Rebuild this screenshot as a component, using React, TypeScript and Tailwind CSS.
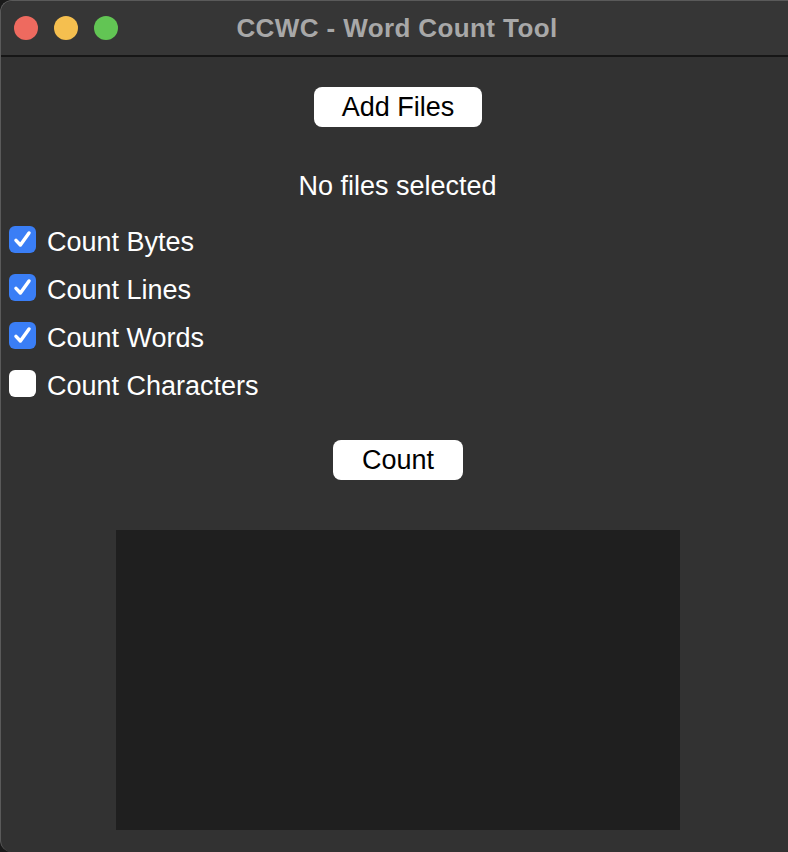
import React, { useState } from "react";

function Check({ checked }: { checked: boolean }) {
  return checked ? (
    <div className="w-[27px] h-[27px] rounded-[6px] bg-[#3a7ef6] flex items-center justify-center shrink-0">
      <svg width="21" height="21" viewBox="0 0 20 20" fill="none">
        <path d="M3.8 10.8 L8 15.2 L16.2 3.8" stroke="white" strokeWidth="3.3" strokeLinecap="round" strokeLinejoin="round" />
      </svg>
    </div>
  ) : (
    <div className="w-[27px] h-[27px] rounded-[6px] bg-white shrink-0" />
  );
}

export default function App() {
  const [opts] = useState([
    { label: "Count Bytes", checked: true },
    { label: "Count Lines", checked: true },
    { label: "Count Words", checked: true },
    { label: "Count Characters", checked: false },
  ]);
  return (
    <div className="w-[788px] h-[852px] bg-[#1a1a1a] overflow-hidden" style={{ fontFamily: '"Liberation Sans", Arial, sans-serif' }}>
      <div className="w-[800px] h-[852px] bg-[#323232] rounded-tl-[12px] rounded-bl-[12px] border-t border-l border-[#5a5a5a] flex flex-col">
        <div className="h-[56px] shrink-0 flex items-center relative border-b-2 border-[#161616] bg-[#363636] rounded-tl-[12px]">
          <div className="flex gap-[16px] pl-[13px]">
            <div className="w-[24px] h-[24px] rounded-full bg-[#ee6a5f]" />
            <div className="w-[24px] h-[24px] rounded-full bg-[#f5bf4f]" />
            <div className="w-[24px] h-[24px] rounded-full bg-[#62c554]" />
          </div>
          <div className="absolute left-[225px] w-[342px] top-0 h-[54px] flex items-center justify-center text-[#a8a8a8] font-bold text-[26px] tracking-[0.4px]">
            CCWC - Word Count Tool
          </div>
        </div>
        <div className="w-[788px] flex flex-col text-[27px]">
          <div className="flex justify-center pl-[6px] pt-[30px]">
            <button className="w-[168px] h-[40px] bg-white rounded-[8px] text-black leading-none flex items-center justify-center">Add Files</button>
          </div>
          <div className="flex justify-center pl-[5px] pt-[44px] text-white leading-[30px]">No files selected</div>
          <div className="flex flex-col pl-[8px] pt-[25px] gap-[21px]">
            {opts.map((o) => (
              <div key={o.label} className="flex items-center gap-[11px] h-[27px] text-white">
                <Check checked={o.checked} />
                <span className="leading-none pt-[6px]">{o.label}</span>
              </div>
            ))}
          </div>
          <div className="flex justify-center pl-[6px] pt-[43px]">
            <button className="w-[130px] h-[40px] bg-white rounded-[8px] text-black leading-none flex items-center justify-center">Count</button>
          </div>
          <div className="flex justify-center pl-[6px] pt-[50px]">
            <div className="w-[564px] h-[300px] bg-[#1f1f1f]" />
          </div>
        </div>
      </div>
    </div>
  );
}
